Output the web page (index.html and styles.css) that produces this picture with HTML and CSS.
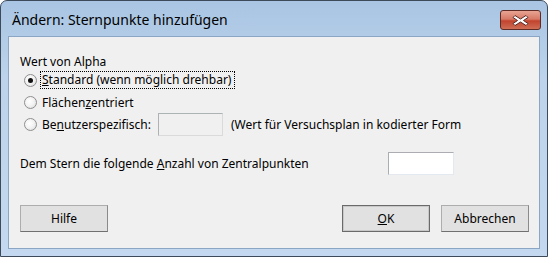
FILE: index.html
```html
<!DOCTYPE html>
<html lang="de">
<head>
    <meta charset="UTF-8">
    <title>Ändern: Sternpunkte hinzufügen</title>
    <link rel="stylesheet" href="styles.css">
</head>
<body>

    <div class="window">
        <!-- Titelleiste -->
        <div class="titlebar">
            <span class="title">Ändern: Sternpunkte hinzufügen</span>
            <div class="close-btn">
                <svg width="17" height="13" viewBox="0 0 17 13">
                    <path d="M3 1.5 L8.5 5 L14 1.5 L16 3.5 L11.5 6.5 L16 9.5 L14 11.5 L8.5 8 L3 11.5 L1 9.5 L5.5 6.5 L1 3.5 Z" fill="#fff" stroke="#5a2a24" stroke-width="1" stroke-linejoin="round"/>
                </svg>
            </div>
        </div>

        <div class="client">
            <div class="group-label">Wert von Alpha</div>

            <div class="option">
                <span class="radio checked"></span>
                <span class="focus"><u>S</u>tandard (wenn möglich drehbar)</span>
            </div>
            <div class="option">
                <span class="radio"></span>
                <span class="opt-text">Flächen<u>z</u>entriert</span>
            </div>
            <div class="option">
                <span class="radio"></span>
                <span class="opt-text">Be<u>n</u>utzerspezifisch:</span>
                <span class="textbox disabled"></span>
                <span class="hint">(Wert für Versuchsplan in kodierter Form</span>
            </div>

            <div class="center-row">
                <span>Dem Stern die folgende <u>A</u>nzahl von Zentralpunkten</span>
                <span class="textbox"></span>
            </div>

            <div class="buttons">
                <button class="btn">Hilfe</button>
                <div class="right-btns">
                    <button class="btn default"><u>O</u>K</button>
                    <button class="btn">Abbrechen</button>
                </div>
            </div>
        </div>
    </div>

</body>
</html>
```

FILE: styles.css
```css
body {
    margin: 0;
    font-family: "Noto Sans", "Liberation Sans", sans-serif;
    background: #fff;
}

.window {
    width: 548px;
    height: 257px;
    box-sizing: border-box;
    border: 1px solid #3c4a5a;
    border-radius: 7px 7px 0 0;
    background: linear-gradient(to bottom, #a9c5e3 0%, #bcd3eb 30%, #c4d9ef 100%);
    padding: 0 7px 7px 7px;
    display: flex;
    flex-direction: column;
}

.titlebar {
    height: 35px;
    display: flex;
    align-items: center;
    justify-content: space-between;
    padding-left: 4px;
}

.title {
    font-size: 14px;
    color: #000;
    margin-top: 2px;
}

.close-btn {
    width: 41px;
    height: 20px;
    box-sizing: border-box;
    border: 1px solid #5e2b25;
    border-radius: 3px;
    background: linear-gradient(to bottom, #e8a493 0%, #d77a66 45%, #c2432e 55%, #cf6e55 100%);
    display: flex;
    align-items: center;
    justify-content: center;
    margin-top: 3px;
    margin-right: -1px;
}

.client {
    flex: 1;
    background: #f0f0f0;
    border: 1px solid #8aa6c4;
    padding: 17px 11px 0 11px;
    font-size: 12px;
    color: #000;
}

.group-label {
    height: 15px;
    line-height: 15px;
}

.option {
    display: flex;
    align-items: center;
    height: 22px;
}

.option:first-of-type {
    margin-top: 3px;
}

/* Radiobutton im Windows-Stil */
.radio {
    width: 13px;
    height: 13px;
    box-sizing: border-box;
    border-radius: 50%;
    border: 1px solid #8f8f8f;
    background: radial-gradient(circle at 40% 40%, #ffffff 0%, #f2f2f2 50%, #d4d4d4 100%);
    margin-left: 4px;
    margin-right: 5px;
    position: relative;
}

.radio.checked::after {
    content: "";
    position: absolute;
    left: 3px;
    top: 3px;
    width: 5px;
    height: 5px;
    border-radius: 50%;
    background: #111;
}

.focus {
    border: 1px dotted #000;
    padding: 0 3px 1px 1px;
    line-height: 15px;
    margin-left: -2px;
}

.opt-text {
    line-height: 15px;
}

.textbox {
    display: inline-block;
    width: 66px;
    height: 23px;
    box-sizing: border-box;
    border: 1px solid #abadb3;
    border-right-color: #e3e9ef;
    border-bottom-color: #e3e9ef;
    background: #fff;
}

.textbox.disabled {
    width: 65px;
    background: #f0f0f0;
    border-color: #adb2b5;
    border-right-color: #dadada;
    border-bottom-color: #dadada;
    margin-left: 7px;
    margin-right: 8px;
}

.center-row {
    display: flex;
    align-items: center;
    justify-content: space-between;
    width: 434px;
    margin-top: 17px;
}

.buttons {
    display: flex;
    justify-content: space-between;
    margin-top: 30px;
    width: 509px;
}

.right-btns {
    display: flex;
    gap: 11px;
}

.btn {
    width: 88px;
    height: 27px;
    font-family: "Noto Sans", "Liberation Sans", sans-serif;
    font-size: 12px;
    color: #000;
    background: #e1e1e1;
    border: 1px solid #adadad;
    border-bottom-color: #707070;
    border-right-color: #8a8a8a;
    padding: 0;
}

.btn.default {
    border: 1px solid #6a6a6a;
    box-shadow: inset 0 0 0 1px #c8c8c8;
}
```
